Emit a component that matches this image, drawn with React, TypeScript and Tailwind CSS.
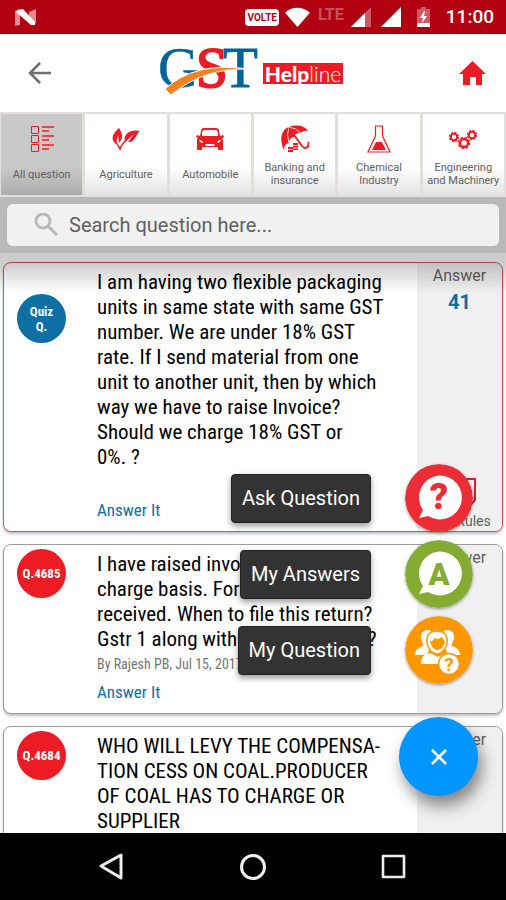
import React from "react";

const GREY = "text-[#5f6061]";
const COND = "font-['Roboto_Condensed','Liberation_Sans_Narrow',Roboto,sans-serif]";

function StatusBar() {
  return (
    <header className="flex h-[34px] shrink-0 items-center justify-between bg-[#b20212] pr-3 pl-[15px] text-white">
      <svg width="21" height="17" viewBox="0 0 21 17" aria-label="Android N">
        <path d="M0 2 5 0v16H4l-4 1zM14 3l7-3v14l-4 2-3-2z" fill="#e08a91" />
        <path d="M3 1 8 0l12 13v3h-4L1 3z" fill="#fff" />
      </svg>
      <div className="flex items-center">
        <span className="mr-[6px] rounded-sm bg-white px-[2px] text-[10px] leading-[17px] font-bold text-[#b20212]">VOLTE</span>
        <svg width="25" height="21" viewBox="0 0 26 22"><path d="M0 6C7-1 18-1 26 6L13 21z" fill="#fff" /></svg>
        <span className="mr-[7px] ml-2 self-start text-base leading-5 font-bold text-[#cc4e5a]">LTE</span>
        <svg width="20" height="20" viewBox="0 0 20 20"><path d="M20 0v20H0z" fill="#cc5964" /><path d="M14 6v14H0z" fill="#fff" /></svg>
        <svg className="ml-[10px]" width="20" height="20" viewBox="0 0 20 20"><path d="M20 0v20H0z" fill="#fff" /></svg>
        <svg className="ml-4" width="13" height="20" viewBox="0 0 13 20">
          <path d="M0 2h4V0h5v2h4v18H0z" fill="#cf5a65" /><path d="M0 16h13v4H0z" fill="#fff" />
          <path d="M7 4 3 11h3l-1 5 5-7H7l1-5z" fill="#fff" />
        </svg>
        <time className="ml-4 text-[19px] leading-6 font-medium">11:00</time>
      </div>
    </header>
  );
}

function Logo() {
  return (
    <div className="mr-2 flex h-12 items-center gap-1" role="img" aria-label="GST Helpline">
      <svg className="overflow-visible" width="100" height="50" viewBox="0 0 100 50">
        <g fontFamily="'Liberation Serif', serif" fontSize="57">
          <text x="-1" y="39" fill="#00649b" stroke="#00649b" strokeWidth="0.5">G</text>
          <text x="37" y="39" fill="#ed1c24" stroke="#ed1c24" strokeWidth="2">S</text>
          <text x="64" y="39" fill="#00649b" stroke="#00649b">T</text>
        </g>
        <path d="M6 41Q36 13 89 21Q44 20 12 47z" fill="#f5821f" stroke="#fff" strokeWidth="1" />
      </svg>
      <span className="bg-[#ed1c24] px-[2px] font-[Lato] text-[21px] leading-[21px] text-white"><b className="font-black">Help</b><span className="font-light">line</span></span>
    </div>
  );
}

function AllIcon() {
  return (
    <svg width="26" height="30" viewBox="0 0 26 30" fill="none" stroke="#ed1c24">
      <path d="M2.500 2.500h7v7h-7zM2.500 11.500h7v7h-7zM2.500 20.500h7v7h-7z" />
      <path d="M13 3h12M13 7h7M13 12h12M13 16h7M13 21h12M13 25h7" strokeWidth="1.600" />
    </svg>
  );
}
function LeafIcon() {
  return (
    <svg width="30" height="30" viewBox="0 0 30 30" fill="#ed1c24">
      <path d="M8 4C0 11 0 16 5 20L7 11l1 8c4-4 4-9 0-15zM29 7C20 5 12 9 14 18l9-8-6 8c7 1 8-8 12-11z" />
      <path d="m5 18 4 7c1-4 3-6 8-11" fill="none" stroke="#ed1c24" strokeWidth="1.500" />
    </svg>
  );
}
function CarIcon() {
  return (
    <svg width="28" height="30" viewBox="0 0 28 30">
      <path fill="#ed1c24" fillRule="evenodd" d="M8 4h12c2 0 3 1 3 3l1 5 3-1 1 2-2 2c2 1 1 4 1 7v4h-5v-3H6v3H1v-9c0-2 0-2 1-3L0 13l1-2 3 1 1-5c0-2 1-3 3-3zm0 2c-2 0-2 4-2 6h16c0-2 0-6-2-6zM3 16l1 2 3 1c0-2-2-3-4-3zm22 0c-2 0-4 1-4 3l3-1zM9 20l1 2h8l1-2z" />
    </svg>
  );
}
function UmbrellaIcon() {
  return (
    <svg width="28" height="30" viewBox="0 0 28 30">
      <path d="M3 26C-2 15 0 6 8 3C16 0 24 2 27 7Q22 6 20 9Q15 8 13 13Q8 14 8 19Q3 20 3 26z" fill="#ed1c24" />
      <path d="M8 3Q5 10 8 19M8 3Q15 4 20 9" fill="none" stroke="#fff" strokeWidth=".8" />
      <path d="m8 4 13 18c3 4 8 1 6-4" fill="none" stroke="#ed1c24" strokeWidth="1.800" />
      <path d="M12 19h5v7h-5zM7 23h5v5H7z" fill="#ed1c24" />
      <path d="M12 21.500h5m-5 2.500h5M7 25.500h5" stroke="#fff" strokeWidth=".8" />
    </svg>
  );
}
function FlaskIcon() {
  return (
    <svg width="26" height="30" viewBox="0 0 26 30">
      <path d="M9 2h8M9.500 2v10L2 28h22l-7.500-16V2" fill="none" stroke="#ed1c24" strokeWidth="1.200" />
      <path d="M10 18h6l4 8H6z" fill="#ed1c24" />
    </svg>
  );
}
function GearsIcon() {
  return (
    <svg width="28" height="30" viewBox="0 0 28 30" fill="none" stroke="#ed1c24">
      <circle cx="5" cy="13" r="3.200" strokeWidth="2" /><circle cx="5" cy="13" r="4.500" strokeWidth="1.400" strokeDasharray="2 1.530" />
      <circle cx="23" cy="11" r="3.200" strokeWidth="2" /><circle cx="23" cy="11" r="4.500" strokeWidth="1.400" strokeDasharray="2 1.530" />
      <circle cx="15" cy="19" r="4" strokeWidth="2.400" /><circle cx="15" cy="19" r="5.600" strokeWidth="1.400" strokeDasharray="2.400 2" />
    </svg>
  );
}

const categories = [
  { label: ["All question"], icon: AllIcon },
  { label: ["Agriculture"], icon: LeafIcon },
  { label: ["Automobile"], icon: CarIcon },
  { label: ["Banking and", "insurance"], icon: UmbrellaIcon },
  { label: ["Chemical", "Industry"], icon: FlaskIcon },
  { label: ["Engineering", "and Machinery"], icon: GearsIcon },
];

function Categories() {
  return (
    <nav className="grid grid-cols-6 gap-[3px] bg-[#e2dede] py-[2px] pr-[2px] pl-px">
      {categories.map(({ label, icon: Icon }, i) => (
        <button key={label[0]} className={`flex h-[81px] min-w-0 flex-col items-center pt-[10px] ${i === 0 ? "bg-linear-to-b from-[#c9c9c9] from-65% to-[#adadad]" : "bg-linear-to-b from-white from-65% to-[#e4e4e4]"}`}>
          <Icon />
          <span className={`flex h-10 flex-col justify-center text-[11px] leading-[13px] whitespace-nowrap ${GREY}`}>
            {label.map((l) => <span key={l}>{l}</span>)}
          </span>
        </button>
      ))}
    </nav>
  );
}

function Bubble({ color, children }: { color: string; children: React.ReactNode }) {
  return (
    <svg width="68" height="68" viewBox="0 0 68 68" className="rounded-full shadow-[0_1px_3px_rgba(0,0,0,0.4)]">
      <circle cx="34" cy="34" r="34" fill={color} />
      {children}
    </svg>
  );
}
const bubblePath = "M34 11.500a22 22 0 1 1-11 40.500l-9 2 4-8A22 22 0 0 1 34 11.500z";

function PeopleIcon() {
  return (
    <g>
      <path d="M16 21c0-5 3-7 7-7 3 0 4 2 4 5l-2 12-3 8H10c0-5 3-7 8-9 1-2-2-5-2-9z" fill="#fff" />
      <path d="M49 21c0-5-3-7-7-7-3 0-4 2-4 5l2 12 3 8h12c0-5-3-7-8-9-1-2 2-5 2-9z" fill="#fff" />
      <path d="M32 15c7 0 11 4 10 12-1 7-6 11-10 11s-9-4-10-11c-1-8 3-12 10-12z" fill="#fff" stroke="#ff9800" strokeWidth="1.500" />
      <path d="M25 25c4 0 4-2 5-4l1 2c3 0 4-1 6-2l3 5c-1 5-5 8-8 8s-6-4-7-9z" fill="#ff9800" />
      <path d="M16 48c0-7 3-10 9-11l8 4 8-4c4 1 6 3 7 11z" fill="#fff" />
      <circle cx="44" cy="48" r="10.500" fill="#fff" stroke="#ff9800" strokeWidth="1.500" />
      <text x="44" y="55" textAnchor="middle" fontFamily="Roboto" fontWeight="700" fontSize="19" fill="#ff9800">?</text>
    </g>
  );
}

const actions = [
  { label: "Ask Question", color: "#ed2d36", glyph: "?" },
  { label: "My Answers", color: "#84ac32", glyph: "A" },
  { label: "My Question", color: "#ff9800", glyph: "" },
];

function FloatingMenu() {
  return (
    <div className="absolute right-7 bottom-[37px] z-20 flex flex-col items-end">
      {actions.map((a) => (
        <div key={a.label} className="mr-[5px] mb-2 flex items-center gap-[34px]">
          <span className="rounded-[4px] border border-[#222] bg-[#333] px-[10px] text-[20px] leading-[47px] whitespace-nowrap text-white shadow-[0_3px_6px_rgba(0,0,0,0.4)]">{a.label}</span>
          <button aria-label={a.label} className="rounded-full">
            <Bubble color={a.color}>
              {a.glyph ? (
                <>
                  <path d={bubblePath} fill="#fff" />
                  <text x="34" y="45" textAnchor="middle" fontFamily="Roboto" fontWeight="900" fontSize={a.glyph === "?" ? 36 : 31} fill={a.color}>{a.glyph}</text>
                </>
              ) : <PeopleIcon />}
            </Bubble>
          </button>
        </div>
      ))}
      <button aria-label="Close menu" className="mt-[25px] grid size-[79px] place-items-center rounded-full bg-[#0396ff] shadow-[4px_10px_16px_rgba(0,0,0,0.45)]">
        <svg width="16" height="16" viewBox="0 0 16 16" stroke="#fff" strokeWidth="2.500"><path d="m1 1 14 14M15 1 1 15" /></svg>
      </button>
    </div>
  );
}

type CardProps = { badge: string[]; quiz?: boolean; lines: string[]; by?: string; count?: string };

function Card({ badge, quiz, lines, by, count }: CardProps) {
  return (
    <article className={`flex overflow-hidden rounded-lg border bg-white shadow-[0_2px_3px_rgba(0,0,0,0.25)] ${quiz ? "border-[#dc5058]" : "border-[#9b9b9b]"}`}>
      <div className={`w-[93px] shrink-0 pl-[13px] ${quiz ? "pt-[31px]" : "pt-1"}`}>
        <div className={`flex size-[49px] flex-col items-center justify-center rounded-full text-[13px] leading-[15px] font-bold text-white ${COND} ${quiz ? "bg-[#0e6fa4]" : "bg-[#ed1c24]"}`}>
          {badge.map((b) => <span key={b}>{b}</span>)}
        </div>
      </div>
      <div className={`min-w-0 flex-1 pt-[7px] pb-[9px] whitespace-nowrap ${COND}`}>
        <p className="text-[21px] leading-[25px] text-black">
          {lines.map((l) => <React.Fragment key={l}>{l}<br /></React.Fragment>)}
        </p>
        {by && <p className="text-[14px] leading-6 text-[#757575]">{by}</p>}
        <a href="#answer" className={`block text-[17px] leading-6 text-[#0e6fa4] ${quiz ? "mt-7" : "mt-1"}`}>Answer It</a>
      </div>
      <aside className={`flex w-[85px] shrink-0 flex-col items-center bg-[#f0f0f0] pt-[3px] ${GREY}`}>
        <span className="text-base leading-5">Answer</span>
        <strong className="mt-1 text-xl leading-6 font-bold text-[#0e6fa4]">{count}</strong>
        {quiz && (
          <div className="mt-auto flex flex-col items-center pb-px text-[14px] leading-[18px]">
            <svg width="34" height="35" viewBox="0 0 34 35" fill="none" stroke="#c32636" strokeWidth="2"><path d="M2 2h30v21l-7 8H2z" /></svg>
            <span className="pl-7">Rules</span>
          </div>
        )}
      </aside>
    </article>
  );
}

function SystemNav() {
  return (
    <footer className="flex h-[67px] shrink-0 items-center justify-center gap-[115px] bg-black">
      <button aria-label="Back key"><svg width="26" height="28" viewBox="0 0 26 28" fill="none" stroke="#eee" strokeWidth="3" strokeLinejoin="round"><path d="M22 2v23L2 13z" /></svg></button>
      <button aria-label="Home key"><svg width="26" height="26" viewBox="0 0 26 26" fill="none" stroke="#eee" strokeWidth="3"><circle cx="13" cy="13" r="11.500" /></svg></button>
      <button aria-label="Recent apps"><svg width="26" height="26" viewBox="0 0 26 26" fill="none" stroke="#eee" strokeWidth="2.600" strokeLinejoin="round"><path d="M2 2h21v21H2z" /></svg></button>
    </footer>
  );
}

export default function App() {
  return (
    <div className="flex h-screen flex-col overflow-hidden bg-white font-[Roboto,sans-serif]">
      <StatusBar />
      <div className="flex h-[78px] shrink-0 items-center justify-between pr-5 pl-7">
        <button aria-label="Back"><svg width="23" height="22" viewBox="0 0 23 22" fill="none" stroke="#6f6f6f" strokeWidth="2.600"><path d="M23 11H2M12 1 2 11l10 10" /></svg></button>
        <Logo />
        <button aria-label="Home"><svg width="27" height="24" viewBox="0 0 27 24" fill="#ed1c24"><path d="M13.500 0 27 13h-4v11h-6v-8h-6v8H4V13H0z" /></svg></button>
      </div>
      <Categories />
      <div className="bg-[#b9b9b9] p-[7px]">
        <label className="flex h-[42px] items-center gap-[11px] rounded-md bg-[#f1f1f1] pl-[27px]">
          <svg width="24" height="24" viewBox="0 0 24 24" fill="none" stroke="#b9b9b9" strokeWidth="3"><circle cx="9" cy="8" r="7" /><path d="m14 13 9 9" /></svg>
          <input aria-label="Search question" placeholder="Search question here..." className="min-w-0 flex-1 bg-transparent text-[20px] outline-none placeholder:text-[#5f6061]" />
        </label>
      </div>
      <div className="relative min-h-0 flex-1 overflow-hidden">
        <main className="flex flex-col gap-3 px-[3px] pt-[9px]">
          <Card quiz badge={["Quiz", "Q."]} count="41" lines={["I am having two flexible packaging", "units in same state with same GST", "number. We are under 18% GST", "rate. If I send material from one", "unit to another unit, then by which", "way we have to raise Invoice?", "Should we charge 18% GST or", "0%. ?"]} />
          <Card badge={["Q.4685"]} by="By Rajesh PB, Jul 15, 2017" lines={["I have raised invoice on reverse", "charge basis. For the services", "received. When to file this return?", "Gstr 1 along with GSTR 3B return?"]} />
          <Card badge={["Q.4684"]} lines={["WHO WILL LEVY THE COMPENSA-", "TION CESS ON COAL.PRODUCER", "OF COAL HAS TO CHARGE OR", "SUPPLIER"]} />
        </main>
        <div className="pointer-events-none absolute inset-x-0 top-0 h-10 bg-linear-to-b from-black/20 from-25% to-transparent" />
        <FloatingMenu />
      </div>
      <SystemNav />
    </div>
  );
}
